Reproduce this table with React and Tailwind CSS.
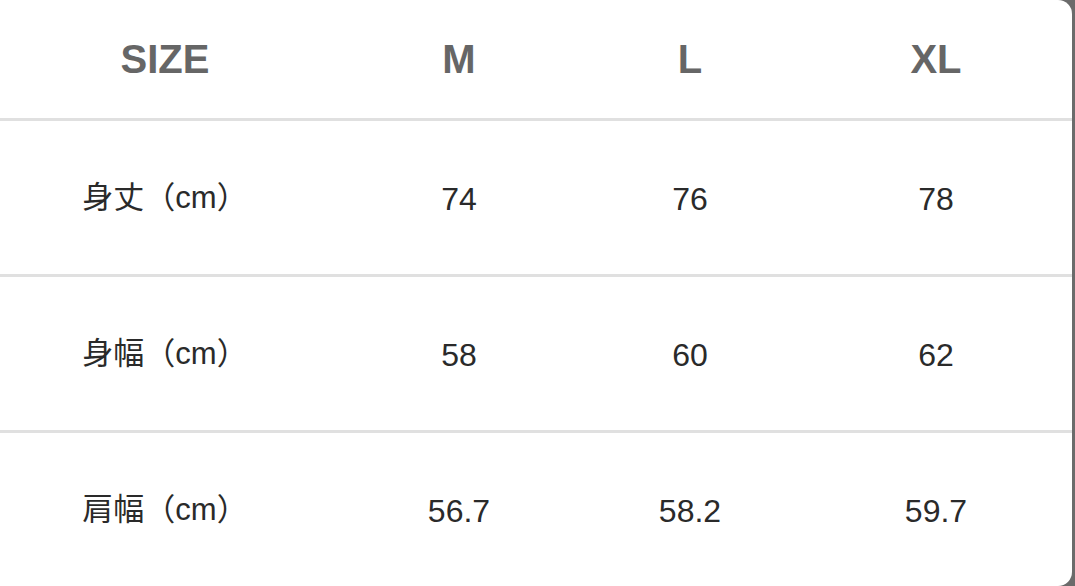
import React from "react";

const cols = "grid grid-cols-[330px_258px_204px_1fr] items-center";

const rows = [
  { label: "身丈（cm）", values: ["74", "76", "78"] },
  { label: "身幅（cm）", values: ["58", "60", "62"] },
  { label: "肩幅（cm）", values: ["56.7", "58.2", "59.7"] },
];

export default function App() {
  return (
    <div className="w-[1075px] h-[586px] bg-[#6b6b6b] overflow-hidden font-['Liberation_Sans','Noto_Sans_CJK_JP',sans-serif]">
      <div className="w-[1072px] h-[586px] bg-white rounded-r-[14px] flex flex-col">
        {/* header */}
        <div className={`${cols} h-[118px] text-[40px] font-bold text-[#666666]`}>
          <div className="text-center">SIZE</div>
          <div className="text-center">M</div>
          <div className="text-center">L</div>
          <div className="text-center pl-2">XL</div>
        </div>
        {rows.map((row) => (
          <React.Fragment key={row.label}>
            <div className="h-[3px] bg-[#e0e0e0]" />
            <div className={`${cols} h-[153px] pt-0.5 text-[32px] text-[#2a2a2a]`}>
              <div className="text-center text-[31px]">{row.label}</div>
              {row.values.map((v, i) => (
                <div key={v} className={i === 2 ? "text-center pl-2" : "text-center"}>{v}</div>
              ))}
            </div>
          </React.Fragment>
        ))}
      </div>
    </div>
  );
}
